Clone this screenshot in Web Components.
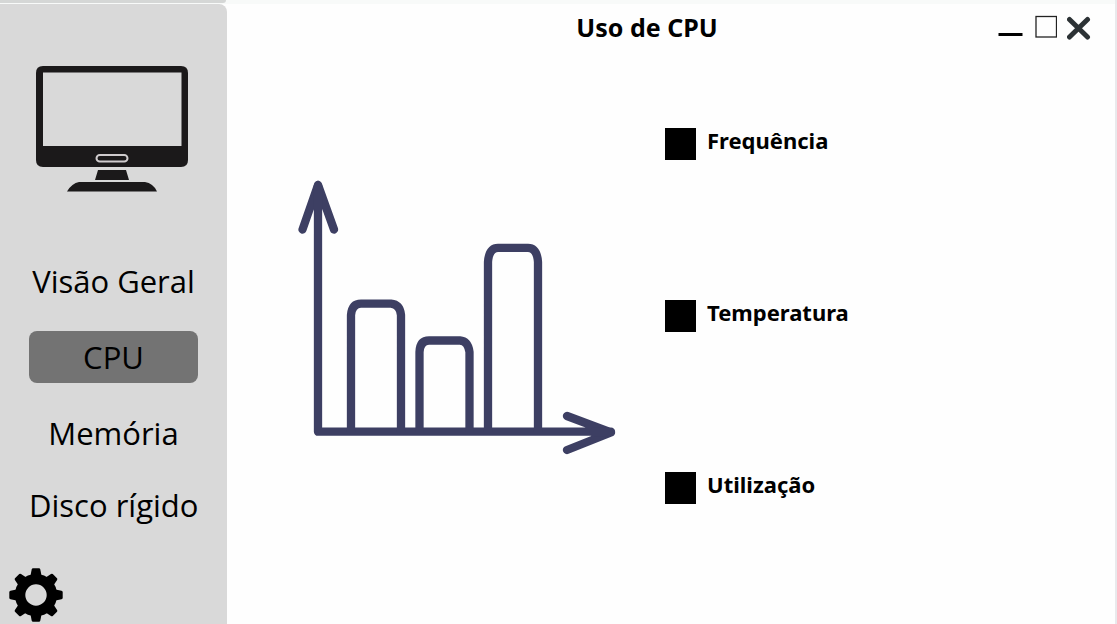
<!DOCTYPE html>
<html lang="pt">
<head>
<meta charset="utf-8">
<meta name="viewport" content="width=device-width, initial-scale=1">
<title>Uso de CPU</title>
<style>
  body { margin: 0; background: #fefefe; color: #000; font-family: "Noto Sans", "Open Sans", sans-serif; }
</style>
</head>
<body>
<monitor-app>
  <side-bar slot="side">
    <nav-item>Visão Geral</nav-item>
    <nav-item active>CPU</nav-item>
    <nav-item>Memória</nav-item>
    <nav-item>Disco rígido</nav-item>
  </side-bar>
  <title-bar slot="title">Uso de CPU</title-bar>
  <bar-chart></bar-chart>
  <chart-legend>
    <legend-item>Frequência</legend-item>
    <legend-item>Temperatura</legend-item>
    <legend-item>Utilização</legend-item>
  </chart-legend>
</monitor-app>
<script>
  const define = (name, html) => customElements.define(name, class extends HTMLElement {
    constructor() {
      super();
      this.attachShadow({ mode: "open" }).innerHTML = html;
    }
  });

  define("monitor-app", `
    <style>
      :host { display: flex; flex-direction: column; min-height: 100vh; box-sizing: border-box; border-right: 2px solid #e9e9ec; }
      .strip { height: 4px; background: #f8faf9; }
      .strip::before { content: ""; display: block; width: 226px; height: 3px; background: #d5d7d6; border-radius: 0 0 4px 0; }
      .window { flex: 1; display: flex; }
      main { flex: 1; display: flex; flex-direction: column; min-width: 0; }
      .content { display: flex; align-items: flex-start; gap: 48px; padding: 78px 24px 24px 70px; }
    </style>
    <div class="strip"></div>
    <div class="window">
      <slot name="side"></slot>
      <main>
        <slot name="title"></slot>
        <div class="content"><slot></slot></div>
      </main>
    </div>`);

  define("side-bar", `
    <style>
      :host { display: flex; flex-direction: column; box-sizing: border-box; width: 227px; padding: 62px 0 2px; background: #d9d9d9; border-radius: 0 8px 0 0; }
      .computer { display: block; width: 152px; height: 126px; margin-left: 36px; }
      nav { display: flex; flex-direction: column; gap: 28px; margin-top: 67px; padding: 0 29px; }
      button { display: block; margin: auto 0 0 9px; padding: 0; border: 0; background: none; width: 54px; height: 54px; cursor: pointer; }
      button svg { display: block; }
    </style>
    <svg class="computer" viewBox="0 0 152 126" aria-hidden="true">
      <path fill="#1b191a" fill-rule="evenodd" d="M7 0H145Q152 0 152 7V94Q152 101 145 101H7Q0 101 0 94V7Q0 0 7 0ZM7 6.500V80H145.500V6.500ZM62 104H90L93 114H59ZM43 116H109Q117 117 121 125.500H31Q36 117 43 116Z"/>
      <rect x="60.500" y="89" width="31" height="6.500" rx="3.250" fill="none" stroke="#cfcbcd" stroke-width="2"/>
    </svg>
    <nav><slot></slot></nav>
    <button type="button" aria-label="Configurações">
      <svg width="54" height="54" viewBox="-27 -27 54 54">
        <defs><path id="tooth" d="M-6 -17L-4.300 -25.500Q-4 -26.700 -3 -26.700H3Q4 -26.700 4.300 -25.500L6 -17Z"/></defs>
        <circle r="15.900" fill="none" stroke="#000" stroke-width="10.400"/>
        <use href="#tooth"/><use href="#tooth" transform="rotate(45)"/><use href="#tooth" transform="rotate(90)"/><use href="#tooth" transform="rotate(135)"/>
        <use href="#tooth" transform="rotate(180)"/><use href="#tooth" transform="rotate(225)"/><use href="#tooth" transform="rotate(270)"/><use href="#tooth" transform="rotate(315)"/>
      </svg>
    </button>`);

  define("nav-item", `
    <style>
      :host { display: block; }
      a { display: block; font-family: "Open Sans", "Noto Sans", sans-serif; font-size: 31px; line-height: 44px; text-align: center; white-space: nowrap; color: #000; text-decoration: none; border-radius: 8px; }
      :host([active]) a { padding: 4px 0; background: #737373; }
    </style>
    <a href="#"><slot></slot></a>`);

  define("title-bar", `
    <style>
      :host { display: flex; align-items: center; height: 46px; padding: 0 24px 0 70px; }
      h1 { flex: 1; margin: 0; font-size: 25px; line-height: 32px; font-weight: 700; text-align: center; }
      .controls { display: flex; gap: 10px; }
      button { display: block; padding: 0; border: 0; background: none; cursor: pointer; }
      svg { display: block; }
    </style>
    <h1><slot></slot></h1>
    <div class="controls">
      <button type="button" aria-label="Minimizar"><svg width="28" height="26"><path d="M1.500 20.500H25.500" stroke="#000" stroke-width="3"/></svg></button>
      <button type="button" aria-label="Maximizar"><svg width="22" height="26"><rect x="1" y="2.500" width="20.500" height="20.500" fill="none" stroke="#222" stroke-width="1.300"/></svg></button>
      <button type="button" aria-label="Fechar"><svg width="24" height="26"><path d="M2.500 5.500L20.500 23M20.500 5.500L2.500 23" stroke="#2c3235" stroke-width="5" stroke-linecap="round"/></svg></button>
    </div>`);

  define("bar-chart", `
    <style>
      :host { display: block; flex: none; padding-top: 52px; }
      svg { display: block; }
    </style>
    <svg width="320" height="276" viewBox="297 180 320 276" role="img" aria-label="Gráfico de barras">
      <g fill="none" stroke="#3d3f63" stroke-width="8.300" stroke-linecap="round" stroke-linejoin="round">
        <path d="M302.500 229.500L318 185L334 229.500M318 185V431.700H611M567 416L611 432.500L567 450"/>
        <path stroke-width="9" d="M318 187V207M594 432H608"/>
        <path stroke-linecap="butt" d="M351 432V315Q352 303.700 361 303.700H391Q400 304.500 401 315V432M419.500 432V352Q420 340.500 429 340.500H460Q468 341 469.500 352V432M488 432V262Q489 248 498 247.800H528Q537 248 538 262V432"/>
      </g>
    </svg>`);

  define("chart-legend", `
    <style>
      :host { display: flex; flex-direction: column; gap: 140px; }
    </style>
    <slot></slot>`);

  define("legend-item", `
    <style>
      :host { display: flex; align-items: flex-start; gap: 11px; font-size: 22px; line-height: 24px; font-weight: 700; }
      .swatch { flex: none; width: 31px; height: 32px; background: #000; }
    </style>
    <span class="swatch"></span>
    <span><slot></slot></span>`);
</script>
</body>
</html>
